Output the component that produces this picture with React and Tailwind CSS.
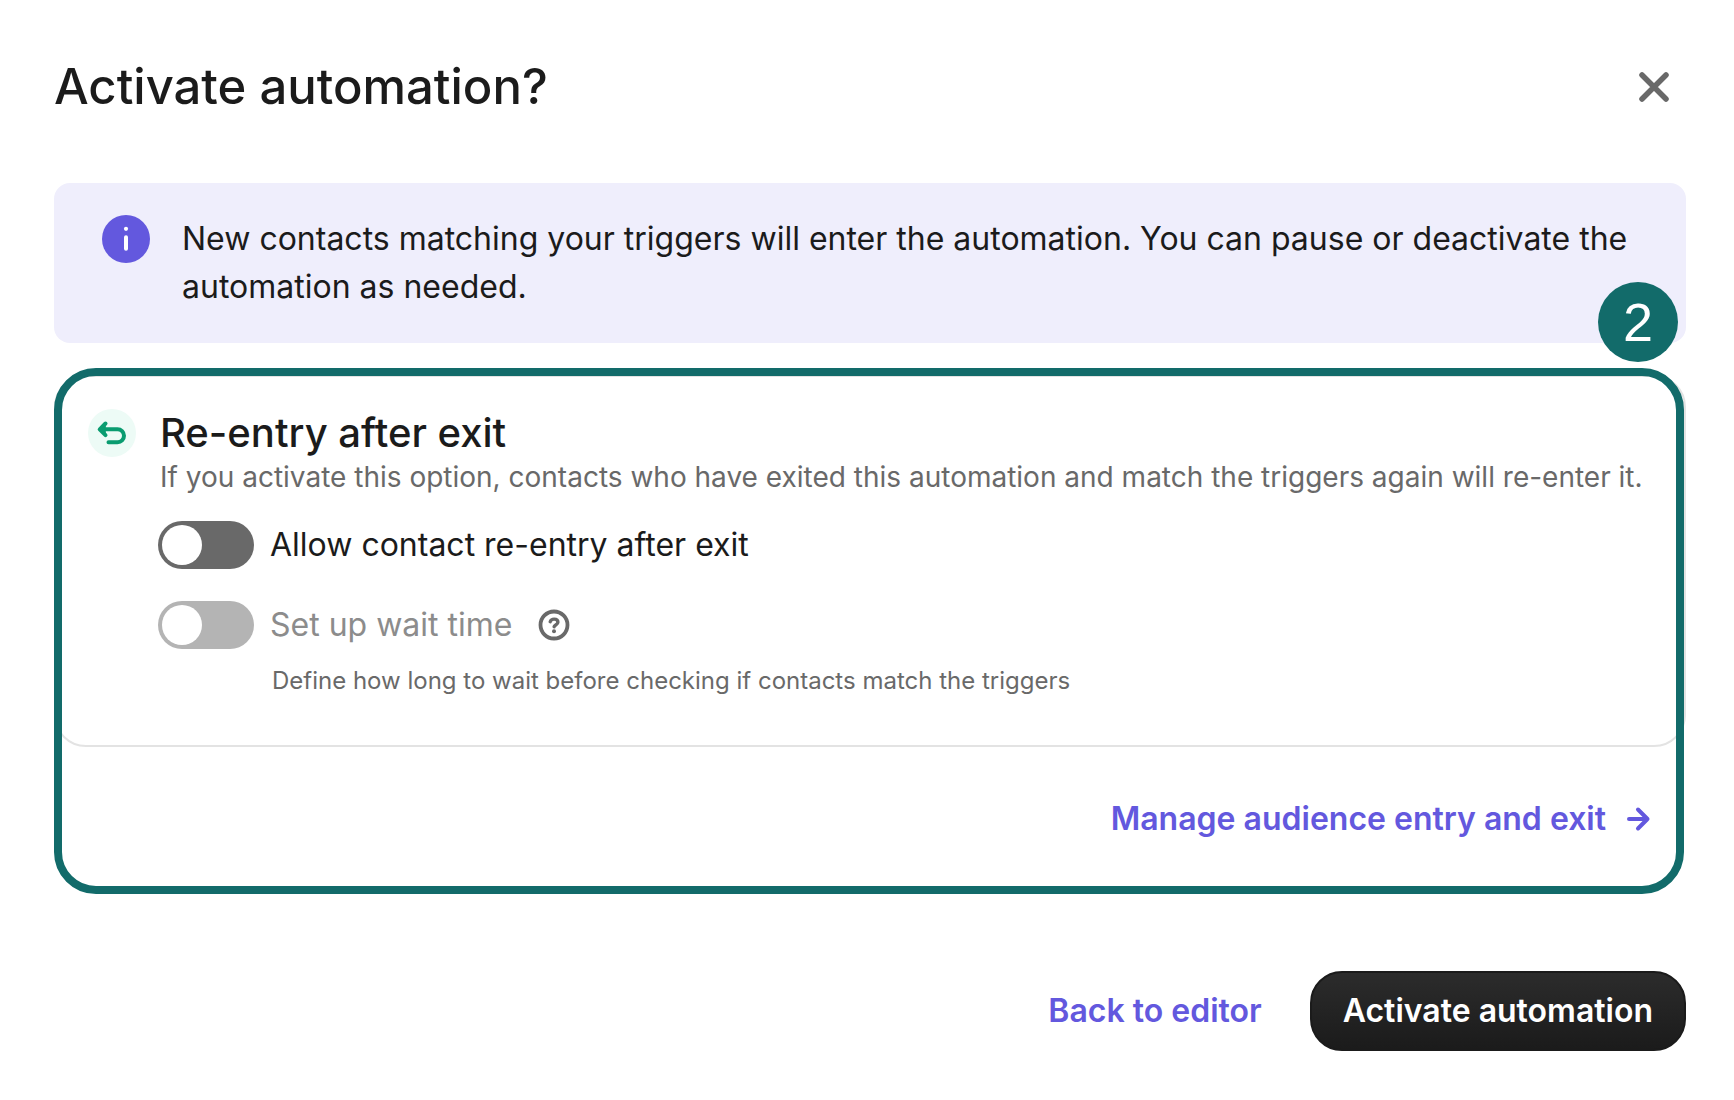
import { useState } from 'react';

function InfoIcon() {
  return (
    <svg viewBox="0 0 48 48" className="w-12 h-12 shrink-0" aria-hidden="true">
      <circle cx="24" cy="24" r="24" fill="#6358de" />
      <circle cx="24" cy="13.800" r="2.100" fill="#fff" />
      <path d="M24 22.300V33.800" stroke="#fff" strokeWidth="4" strokeLinecap="round" />
    </svg>
  );
}

function Toggle({ id, checked, onChange, disabled }) {
  return (
    <input
      id={id}
      type="checkbox"
      role="switch"
      checked={checked}
      onChange={onChange}
      disabled={disabled}
      className="appearance-none w-24 h-12 shrink-0 rounded-full bg-[#696969] p-1 cursor-pointer disabled:bg-[#b4b4b4] disabled:cursor-default before:block before:w-10 before:h-10 before:rounded-full before:bg-white checked:bg-[#6358de] checked:before:ml-auto"
    />
  );
}

export default function App() {
  const [reentry, setReentry] = useState(false);
  const [wait, setWait] = useState(false);

  return (
    <main
      role="dialog"
      aria-labelledby="dialog-title"
      className="bg-white pt-14 pr-12 pb-12 pl-[54px] font-[Inter,'Liberation_Sans',sans-serif] [font-optical-sizing:none] text-[#1b1b1b]"
    >
      <header className="flex items-center justify-between pr-4">
        <h1 id="dialog-title" className="text-[49px] leading-[62px] font-medium">Activate automation?</h1>
        <button type="button" aria-label="Close" className="text-[#696969]">
          <svg viewBox="0 0 32 32" className="w-8 h-8" fill="none" stroke="currentColor" strokeWidth="5.500" strokeLinecap="round">
            <path d="M4 4l24 24M28 4l-24 24" />
          </svg>
        </button>
      </header>

      <div className="mt-[65px] flex gap-8 rounded-2xl bg-[#efeefc] px-12 py-8">
        <InfoIcon />
        <p className="text-[32px] leading-12">
          New contacts matching your triggers will enter the automation. You can pause or deactivate the automation as needed.
        </p>
      </div>

      <div className="relative mt-8">
        <section className="flex gap-[22px] rounded-[32px] border-2 border-[#e3e3e3] px-8 pt-8 pb-12">
          <svg viewBox="0 0 48 48" className="w-12 h-12 shrink-0" fill="none" aria-hidden="true">
            <circle cx="24" cy="24" r="24" fill="#edfbf6" />
            <path d="M17.800 14.500L12 20.300l5.800 5.800z" fill="#0a9c70" />
            <path d="M17.500 14.500l-5.800 5.800 5.800 5.800M12 20.300H29.500a6.500 6.500 0 0 1 0 13H20.500" stroke="#0a9c70" strokeWidth="4" strokeLinecap="round" strokeLinejoin="round" />
          </svg>
          <div>
            <div className="pl-0.5">
              <h2 className="text-[40px] leading-12 font-medium">Re-entry after exit</h2>
              <p className="text-[28px] leading-10 text-[#696969]">
                If you activate this option, contacts who have exited this automation and match the triggers again will re-enter it.
              </p>
            </div>
            <div className="mt-6 flex items-center gap-4">
              <Toggle id="reentry" checked={reentry} onChange={() => setReentry(!reentry)} />
              <label htmlFor="reentry" className="text-[32px] leading-12">Allow contact re-entry after exit</label>
            </div>
            <div className="mt-8 flex items-center gap-4">
              <Toggle id="wait" checked={wait} onChange={() => setWait(!wait)} disabled={!reentry} />
              <label htmlFor="wait" className="text-[32px] leading-12 text-[#8c8c8c]">Set up wait time</label>
              <button type="button" aria-label="Help" className="ml-2.5 text-[#696969]">
                <svg viewBox="0 0 32 32" className="w-8 h-8" fill="none" stroke="currentColor" strokeLinecap="round" strokeLinejoin="round">
                  <circle cx="16" cy="16" r="13.500" strokeWidth="3.800" />
                  <path d="M12.200 12.700C12.800 11 14.200 10.100 16.100 10.100c2.200 0 3.800 1.200 3.800 3.100 0 2.600-3.600 2.800-3.800 4.600" strokeWidth="3.400" />
                  <circle cx="16" cy="22.300" r="2" fill="currentColor" stroke="none" />
                </svg>
              </button>
            </div>
            <p className="mt-4 ml-[114px] text-[24px] leading-8 text-[#696969]">
              Define how long to wait before checking if contacts match the triggers
            </p>
          </div>
        </section>

        <div className="flex justify-end px-8 py-12">
          <a href="#audience" className="flex items-center gap-4 text-[32px] leading-12 font-semibold text-[#6358de]">
            Manage audience entry and exit
            <svg viewBox="0 0 32 32" className="w-8 h-8" fill="none" stroke="currentColor" strokeWidth="4" strokeLinecap="round" strokeLinejoin="round">
              <path d="M7 16h18.500M16 6.500l9.500 9.500-9.500 9.500" />
            </svg>
          </a>
        </div>

        {/* callout frame and its step number */}
        <div className="pointer-events-none absolute -top-[7px] left-0 right-0.5 -bottom-[3px] rounded-[42px] border-8 border-[#126b6a]" />
        <span className="absolute -top-[93px] right-2 flex w-20 h-20 items-center justify-center rounded-full bg-[#126b6a] font-['Liberation_Sans',sans-serif] text-[54px] leading-none text-white">
          2
        </span>
      </div>

      <footer className="mt-20 flex items-center justify-end gap-12 text-[32px] leading-12 font-semibold">
        <button type="button" className="text-[#6358de]">Back to editor</button>
        <button type="button" className="rounded-[32px] border-2 border-[#1b1b1b] bg-linear-to-b from-[#2c2c2c] to-[#1b1b1b] px-[31px] py-3.5 text-white">
          Activate automation
        </button>
      </footer>
    </main>
  );
}
